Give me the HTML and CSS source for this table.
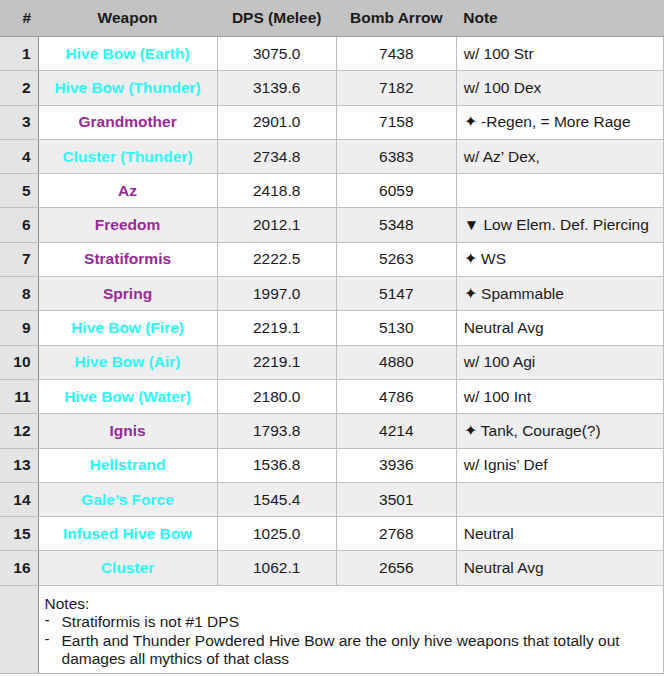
FILE: index.html
```html
<!DOCTYPE html>
<html>
<head>
<meta charset="utf-8">
<link rel="stylesheet" href="styles.css">
</head>
<body>
<table class="sheet">
  <colgroup>
    <col class="c-num"><col class="c-weapon"><col class="c-dps"><col class="c-bomb"><col class="c-note">
  </colgroup>
  <thead>
    <tr class="head">
      <th class="num">#</th>
      <th>Weapon</th>
      <th>DPS (Melee)</th>
      <th>Bomb Arrow</th>
      <th class="left">Note</th>
    </tr>
  </thead>
  <tbody>
    <tr><td class="num">1</td><td class="w cyan">Hive Bow (Earth)</td><td>3075.0</td><td>7438</td><td class="note">w/ 100 Str</td></tr>
    <tr class="alt"><td class="num">2</td><td class="w cyan">Hive Bow (Thunder)</td><td>3139.6</td><td>7182</td><td class="note">w/ 100 Dex</td></tr>
    <tr><td class="num">3</td><td class="w purple">Grandmother</td><td>2901.0</td><td>7158</td><td class="note">✦ -Regen, = More Rage</td></tr>
    <tr class="alt"><td class="num">4</td><td class="w cyan">Cluster (Thunder)</td><td>2734.8</td><td>6383</td><td class="note">w/ Az’ Dex,</td></tr>
    <tr><td class="num">5</td><td class="w purple">Az</td><td>2418.8</td><td>6059</td><td class="note"></td></tr>
    <tr class="alt"><td class="num">6</td><td class="w purple">Freedom</td><td>2012.1</td><td>5348</td><td class="note">▼ Low Elem. Def. Piercing</td></tr>
    <tr><td class="num">7</td><td class="w purple">Stratiformis</td><td>2222.5</td><td>5263</td><td class="note">✦ WS</td></tr>
    <tr class="alt"><td class="num">8</td><td class="w purple">Spring</td><td>1997.0</td><td>5147</td><td class="note">✦ Spammable</td></tr>
    <tr><td class="num">9</td><td class="w cyan">Hive Bow (Fire)</td><td>2219.1</td><td>5130</td><td class="note">Neutral Avg</td></tr>
    <tr class="alt"><td class="num">10</td><td class="w cyan">Hive Bow (Air)</td><td>2219.1</td><td>4880</td><td class="note">w/ 100 Agi</td></tr>
    <tr><td class="num">11</td><td class="w cyan">Hive Bow (Water)</td><td>2180.0</td><td>4786</td><td class="note">w/ 100 Int</td></tr>
    <tr class="alt"><td class="num">12</td><td class="w purple">Ignis</td><td>1793.8</td><td>4214</td><td class="note">✦ Tank, Courage(?)</td></tr>
    <tr><td class="num">13</td><td class="w cyan">Hellstrand</td><td>1536.8</td><td>3936</td><td class="note">w/ Ignis’ Def</td></tr>
    <tr class="alt"><td class="num">14</td><td class="w cyan">Gale’s Force</td><td>1545.4</td><td>3501</td><td class="note"></td></tr>
    <tr><td class="num">15</td><td class="w cyan">Infused Hive Bow</td><td>1025.0</td><td>2768</td><td class="note">Neutral</td></tr>
    <tr class="alt"><td class="num">16</td><td class="w cyan">Cluster</td><td>1062.1</td><td>2656</td><td class="note">Neutral Avg</td></tr>
    <tr class="notes-row">
      <td class="num"></td>
      <td colspan="4" class="notes">
        <div>Notes:</div>
        <ul class="list">
          <li>Stratiformis is not #1 DPS</li>
          <li>Earth and Thunder Powdered Hive Bow are the only hive weapons that totally out damages all mythics of that class</li>
        </ul>
      </td>
    </tr>
  </tbody>
</table>
</body>
</html>
```
FILE: styles.css
```css
html, body {
  margin: 0;
  padding: 0;
  background: #ffffff;
}

body {
  font-family: "Liberation Sans", Arial, sans-serif;
  font-size: 15.5px;
  color: #1a1a1a;
}

.sheet {
  border-collapse: collapse;
  table-layout: fixed;
  width: 664px;
}

.c-num { width: 38px; }
.c-weapon { width: 179px; }
.c-dps { width: 119px; }
.c-bomb { width: 120px; }
.c-note { width: 207px; }

.head th {
  background: #c3c3c3;
  height: 36px;
  padding: 0;
  font-weight: bold;
  text-align: center;
  border-bottom: 1px solid #9a9a9a;
  vertical-align: middle;
}

.head th.left {
  text-align: left;
  padding-left: 7px;
}

.head th.num {
  text-align: right;
  padding-right: 7px;
}

tbody td {
  height: 33.3px;
  padding: 0;
  text-align: center;
  vertical-align: middle;
  border: 1px solid #c0c0c0;
  background: #ffffff;
}

tbody tr.alt td {
  background: #eeeeee;
}

tbody td.num,
tbody tr.alt td.num {
  background: #e4e4e4;
  font-weight: bold;
  text-align: right;
  padding-right: 7px;
  border-left: none;
  border-right: 1px solid #8c8c8c;
}

tbody tr:first-child td {
  border-top: none;
}

td.w {
  font-weight: bold;
}

.cyan { color: #30f6f6; }
.purple { color: #962a94; }

td.note {
  text-align: left;
  padding-left: 7px;
}

.notes-row td {
  height: 78px;
  border-bottom: 1px solid #b8b8b8;
}

td.notes {
  text-align: left;
  vertical-align: top;
  padding: 9px 8px 0 6px;
  line-height: 18.5px;
}

.list {
  list-style: none;
  margin: 0;
  padding: 0;
}

.list li {
  position: relative;
  padding-left: 17px;
}

.list li::before {
  content: "-";
  position: absolute;
  left: 0;
  top: -2px;
}
```
